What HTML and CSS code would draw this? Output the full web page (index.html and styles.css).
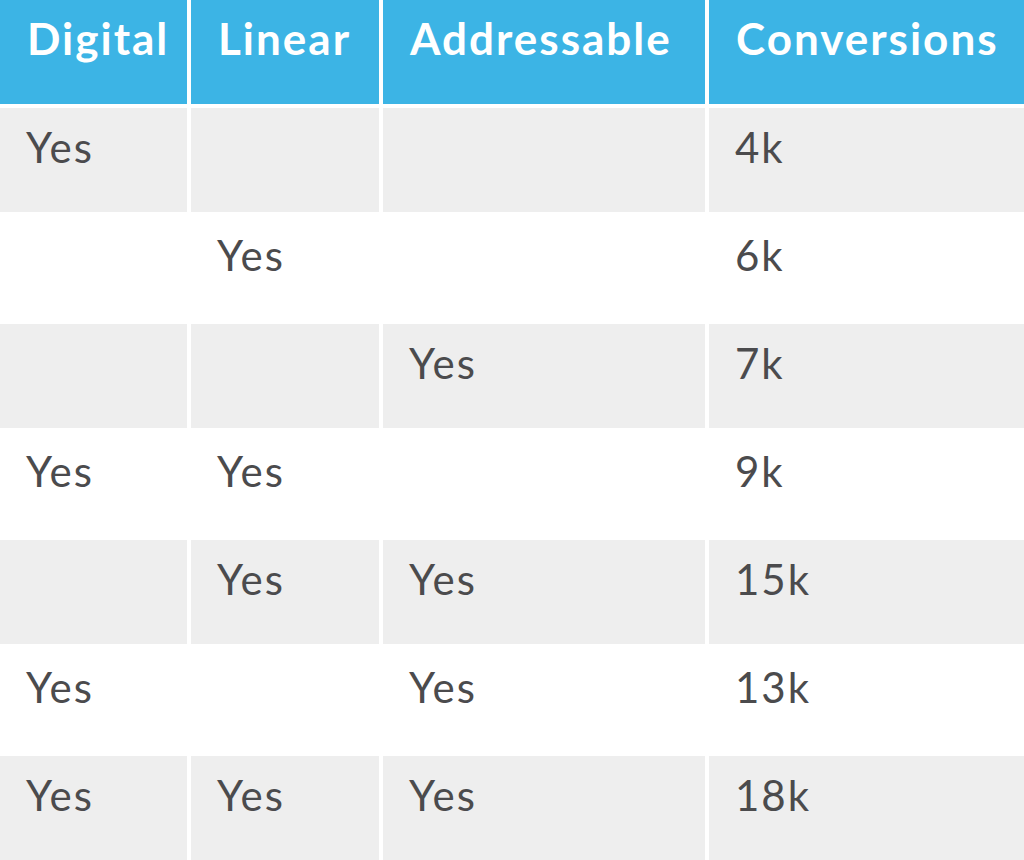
FILE: index.html
```
<!DOCTYPE html>
<html>
<head>
<meta charset="utf-8">
<link rel="stylesheet" href="styles.css">
</head>
<body>
<div class="table">
  <div class="cell head">Digital</div>
  <div class="cell head">Linear</div>
  <div class="cell head">Addressable</div>
  <div class="cell head">Conversions</div>

  <div class="cell odd">Yes</div><div class="cell odd"></div><div class="cell odd"></div><div class="cell odd">4k</div>
  <div class="cell even"></div><div class="cell even">Yes</div><div class="cell even"></div><div class="cell even">6k</div>
  <div class="cell odd"></div><div class="cell odd"></div><div class="cell odd">Yes</div><div class="cell odd">7k</div>
  <div class="cell even">Yes</div><div class="cell even">Yes</div><div class="cell even"></div><div class="cell even">9k</div>
  <div class="cell odd"></div><div class="cell odd">Yes</div><div class="cell odd">Yes</div><div class="cell odd">15k</div>
  <div class="cell even">Yes</div><div class="cell even"></div><div class="cell even">Yes</div><div class="cell even">13k</div>
  <div class="cell odd">Yes</div><div class="cell odd">Yes</div><div class="cell odd">Yes</div><div class="cell odd">18k</div>
</div>
</body>
</html>
```
FILE: styles.css
```
html, body {
  margin: 0;
  padding: 0;
  background: #ffffff;
}
.table {
  display: grid;
  grid-template-columns: 187px 188px 322px 315px;
  grid-auto-rows: 104px;
  gap: 4px;
  width: 1024px;
  font-family: Lato, "Open Sans", sans-serif;
}
.cell {
  padding: 18px 0 0 26px;
  font-size: 42px;
  line-height: 1;
  letter-spacing: 2px;
  color: #4b4b4d;
  box-sizing: border-box;
}
.head {
  background: #3cb4e5;
  color: #ffffff;
  font-weight: 700;
  font-size: 44px;
  letter-spacing: 2px;
  padding-top: 16px;
  padding-left: 27px;
}
.odd {
  background: #eeeeee;
}
.even {
  background: #ffffff;
}
```
